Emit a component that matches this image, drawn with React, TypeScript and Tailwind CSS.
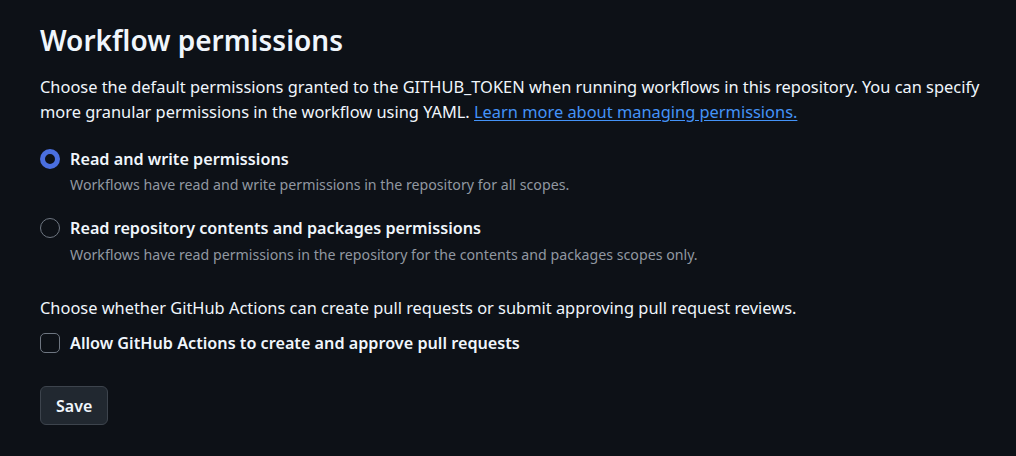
export default function App() {
  return (
    <div
      className="min-h-[456px] w-full bg-[#0d1117] pl-10 pr-4 pt-[23px] text-[#f0f6fc]"
      style={{ fontFamily: '"Noto Sans", "Open Sans", sans-serif' }}
    >
      <h2 className="text-[28px] font-semibold leading-[34px]">Workflow permissions</h2>
      <p className="mt-[17px] max-w-[950px] text-[16.4px] leading-[25px]">
        Choose the default permissions granted to the GITHUB_TOKEN when running workflows in this repository. You can specify
        more granular permissions in the workflow using YAML.{" "}
        <a href="#" className="text-[#4493f8] underline underline-offset-2">
          Learn more about managing permissions.
        </a>
      </p>

      <div className="mt-[23px] flex flex-col gap-[21px]">
        <div>
          <label className="flex items-center gap-[10px]">
            <span className="h-[20px] w-[20px] rounded-full border-[5px] border-[#4a6fdf] bg-[#0d1117]" />
            <span className="text-[16.2px] font-semibold leading-6">Read and write permissions</span>
          </label>
          <p className="mt-[4px] pl-[30px] text-[14.2px] leading-5 text-[#9198a1]">
            Workflows have read and write permissions in the repository for all scopes.
          </p>
        </div>
        <div>
          <label className="flex items-center gap-[10px]">
            <span className="h-[20px] w-[20px] rounded-full border border-[#6e7681]" />
            <span className="text-[16.2px] font-semibold leading-6">Read repository contents and packages permissions</span>
          </label>
          <p className="mt-[5px] pl-[30px] text-[14.2px] leading-5 text-[#9198a1]">
            Workflows have read permissions in the repository for the contents and packages scopes only.
          </p>
        </div>
      </div>

      <p className="mt-[31px] text-[16.4px] leading-6">
        Choose whether GitHub Actions can create pull requests or submit approving pull request reviews.
      </p>
      <label className="mt-[11px] flex items-center gap-[10px]">
        <span className="h-[20px] w-[20px] rounded-[5px] border border-[#6e7681]" />
        <span className="text-[16.2px] font-semibold leading-6">Allow GitHub Actions to create and approve pull requests</span>
      </label>

      <button className="mt-[31px] h-[39px] rounded-md border border-[#3d444d] bg-[#212830] px-[15px] text-[16px] font-semibold">
        Save
      </button>
    </div>
  );
}
